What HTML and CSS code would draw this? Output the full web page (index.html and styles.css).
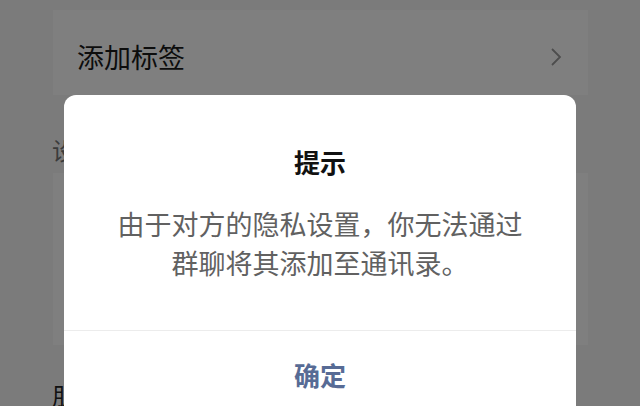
FILE: index.html
```html
<!DOCTYPE html>
<html lang="zh-CN">
<head>
<meta charset="utf-8">
<link rel="stylesheet" href="styles.css">
</head>
<body>
<div class="page">
  <div class="card card-tag">
    <span class="row-text">添加标签</span>
    <svg class="chev" width="12" height="20" viewBox="0 0 12 20"><path d="M2 2 L10 10 L2 18" fill="none" stroke="#9a9a9a" stroke-width="1.8"/></svg>
  </div>
  <div class="section-label">设置朋友圈权限</div>
  <div class="card card-group">
    <div class="group-row">不让他看</div>
    <div class="group-row">不看他</div>
  </div>
  <div class="section-label label-bottom">朋友权限</div>
</div>
<div class="overlay"></div>
<div class="dialog">
  <div class="dialog-title">提示</div>
  <div class="dialog-body">由于对方的隐私设置，你无法通过<br>群聊将其添加至通讯录。</div>
  <div class="dialog-footer">确定</div>
</div>
</body>
</html>
```
FILE: styles.css
```css
html, body {
  margin: 0;
  padding: 0;
  width: 640px;
  height: 406px;
  overflow: hidden;
  background: #f6f6f6;
  font-family: "Noto Sans CJK SC", "Noto Sans", sans-serif;
}
.page {
  height: 406px;
  overflow: hidden;
  padding: 10px 52px 0 53px;
  box-sizing: border-box;
  display: flex;
  flex-direction: column;
}
.card {
  background: #ffffff;
  width: 535px;
  flex-shrink: 0;
}
.card-tag {
  height: 85px;
  display: flex;
  align-items: center;
  justify-content: space-between;
  padding: 8px 26px 0 24px;
  box-sizing: border-box;
}
.row-text {
  font-size: 27px;
  color: #1a1a1a;
}
.section-label {
  flex-shrink: 0;
  font-size: 24px;
  color: #777777;
  height: 78px;
  line-height: 110px;
  margin-left: -1px;
}
.card-group {
  height: 172px;
  display: flex;
  flex-direction: column;
}
.group-row {
  flex: 1;
  padding-left: 24px;
  font-size: 27px;
  color: #1a1a1a;
  display: flex;
  align-items: center;
}
.label-bottom {
  height: 60px;
  line-height: 100px;
  color: #222222;
}
.overlay {
  position: fixed;
  inset: 0;
  background: rgba(0, 0, 0, 0.5);
}
.dialog {
  position: fixed;
  left: 64px;
  top: 95px;
  width: 512px;
  bottom: 0;
  background: #ffffff;
  border-radius: 12px 12px 0 0;
  display: flex;
  flex-direction: column;
}
.dialog-title {
  padding-top: 49px;
  font-size: 26px;
  font-weight: 700;
  line-height: 36px;
  text-align: center;
  color: #111111;
}
.dialog-body {
  margin-top: 24px;
  padding-bottom: 48px;
  font-size: 27px;
  line-height: 39px;
  text-align: center;
  color: #616161;
  border-bottom: 1px solid #ececec;
}
.dialog-footer {
  height: 74px;
  line-height: 88px;
  text-align: center;
  font-size: 26px;
  font-weight: 700;
  color: #576b95;
  overflow: hidden;
}
```
